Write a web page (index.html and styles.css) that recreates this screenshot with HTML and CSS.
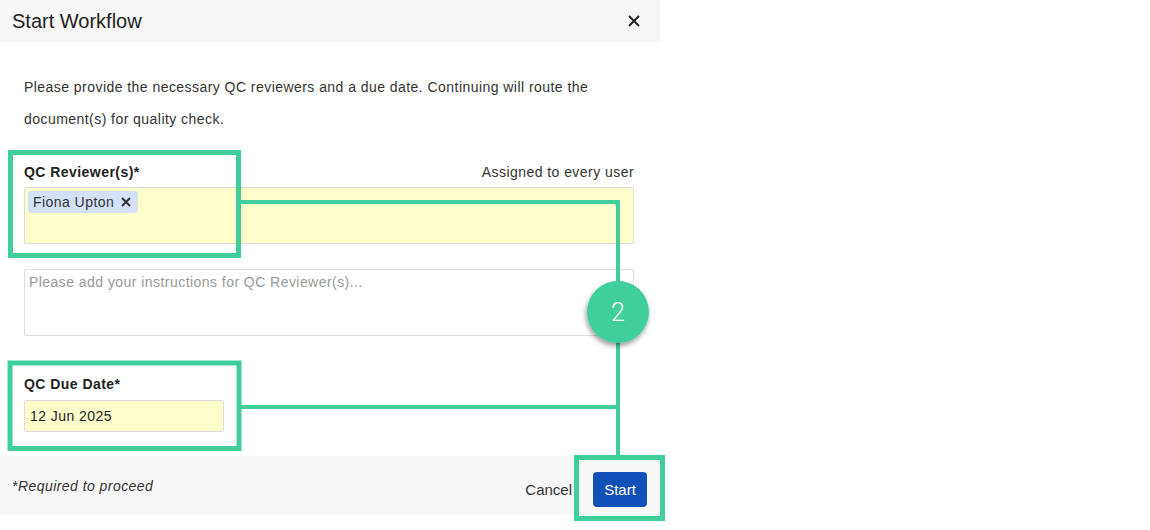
FILE: index.html
```html
<!DOCTYPE html>
<html lang="en">
<head>
    <meta charset="UTF-8">
    <title>Start Workflow</title>
    <link rel="stylesheet" href="styles.css">
</head>
<body>
    <div class="stage">
        <div class="dialog">
            <div class="dialog-header">
                <h2 class="dialog-title">Start Workflow</h2>
                <svg class="dialog-close" width="12" height="12" viewBox="0 0 12 12">
                    <path d="M1 1 L11 11 M11 1 L1 11" stroke="#222" stroke-width="2" fill="none"/>
                </svg>
            </div>

            <div class="dialog-body">
                <p class="dialog-text">
                    Please provide the necessary QC reviewers and a due date. Continuing will route the
                    document(s) for quality check.
                </p>

                <div class="field-head">
                    <label class="field-label">QC Reviewer(s)*</label>
                    <span class="field-note">Assigned to every user</span>
                </div>
                <div class="reviewer-box">
                    <span class="chip">Fiona Upton
                        <svg class="chip-remove" width="10" height="10" viewBox="0 0 10 10">
                            <path d="M1 1 L9 9 M9 1 L1 9" stroke="#333" stroke-width="2" fill="none"/>
                        </svg>
                    </span>
                    <span class="caret"></span>
                </div>

                <textarea class="instructions" placeholder="Please add your instructions for QC Reviewer(s)..."></textarea>

                <div class="field-head due-head">
                    <label class="field-label">QC Due Date*</label>
                </div>
                <div class="date-input">12 Jun 2025</div>
            </div>

            <div class="dialog-footer">
                <span class="required-note">*Required to proceed</span>
                <div class="dialog-actions">
                    <span class="btn-link">Cancel</span>
                    <button class="btn-start">Start</button>
                </div>
            </div>
        </div>

        <!-- callout overlay -->
        <svg class="callout" width="680" height="530" viewBox="0 0 680 530">
            <defs>
                <filter id="badgeShadow" x="-30%" y="-30%" width="160%" height="170%">
                    <feDropShadow dx="-1" dy="3" stdDeviation="2.5" flood-color="#000" flood-opacity="0.4"/>
                </filter>
            </defs>
            <g fill="none" stroke="#40cf9b">
                <rect x="10.5" y="152.5" width="228" height="103" stroke-width="5"/>
                <rect x="10" y="363" width="229" height="85.5" stroke-width="5"/>
                <rect x="576.5" y="457.5" width="86" height="61" stroke-width="5"/>
                <path d="M241 202 H618 V455" stroke-width="4"/>
                <path d="M241 407 H618" stroke-width="4"/>
            </g>
            <circle cx="618" cy="312" r="31" fill="#40cf9b" filter="url(#badgeShadow)"/>
            <text class="callout-num" x="618" y="321" text-anchor="middle">2</text>
        </svg>
    </div>
</body>
</html>
```

FILE: styles.css
```css
* {
    box-sizing: border-box;
}

body {
    margin: 0;
    font-family: "Liberation Sans", Arial, sans-serif;
    background: #fff;
    color: #333;
}

.stage {
    position: relative;
    width: 1150px;
    height: 530px;
}

.dialog {
    width: 660px;
}

.dialog-header {
    height: 42px;
    padding: 0 20px 0 12px;
    display: flex;
    align-items: center;
    justify-content: space-between;
    background: #f7f7f7;
}

.dialog-title {
    margin: 0;
    font-size: 20px;
    font-weight: 400;
    color: #222;
}

.dialog-close {
    display: block;
}

.dialog-body {
    padding: 29px 26px 24px 24px;
    font-size: 14px;
    letter-spacing: 0.45px;
}

.dialog-text {
    margin: 0;
    line-height: 32px;
    color: #333;
}

.field-head {
    margin-top: 27px;
    margin-bottom: 5px;
    height: 20px;
    display: flex;
    align-items: center;
    justify-content: space-between;
}

.field-label {
    font-weight: 700;
    color: #222;
}

.field-note {
    color: #333;
}

.reviewer-box {
    position: relative;
    height: 57px;
    padding: 3px;
    border: 1px solid #ddd;
    border-radius: 2px;
    background: #ffffcc;
}

.chip {
    display: inline-flex;
    align-items: center;
    gap: 7px;
    height: 22px;
    padding: 0 7px 0 5px;
    border-radius: 3px;
    background: #d3e2f8;
    color: #333;
}

.chip-remove {
    display: block;
}

.caret {
    position: absolute;
    top: 12px;
    right: 13px;
    border-left: 4px solid transparent;
    border-right: 4px solid transparent;
    border-top: 5px solid #333;
}

.instructions {
    display: block;
    width: 610px;
    height: 67px;
    margin: 25px 0 0;
    padding: 4px;
    border: 1px solid #ddd;
    border-radius: 2px;
    resize: none;
    font-family: inherit;
    font-size: 14px;
    letter-spacing: 0.45px;
    line-height: 16px;
    color: #333;
}

.instructions::placeholder {
    color: #999;
}

.due-head {
    margin-top: 38px;
    margin-bottom: 6px;
}

.date-input {
    width: 200px;
    height: 32px;
    padding: 0 5px;
    display: flex;
    align-items: center;
    border: 1px solid #ddd;
    border-radius: 2px;
    background: #ffffcc;
    color: #222;
}

.dialog-footer {
    height: 59px;
    padding: 0 13px 0 12px;
    display: flex;
    align-items: center;
    justify-content: space-between;
    background: #f7f7f7;
}

.required-note {
    font-size: 14px;
    font-style: italic;
    letter-spacing: 0.45px;
    color: #333;
}

.dialog-actions {
    margin-top: 7px;
    display: flex;
    align-items: center;
    gap: 21px;
}

.btn-link {
    font-size: 15px;
    color: #333;
}

.btn-start {
    width: 54px;
    height: 35px;
    border: none;
    border-radius: 4px;
    background: #1151b7;
    color: #fff;
    font-family: inherit;
    font-size: 15px;
}

/* выноска поверх диалога */
.callout {
    position: absolute;
    top: 0;
    left: 0;
}

.callout-num {
    font-family: Roboto, sans-serif;
    font-weight: 300;
    font-size: 25px;
    fill: #fff;
}
```
